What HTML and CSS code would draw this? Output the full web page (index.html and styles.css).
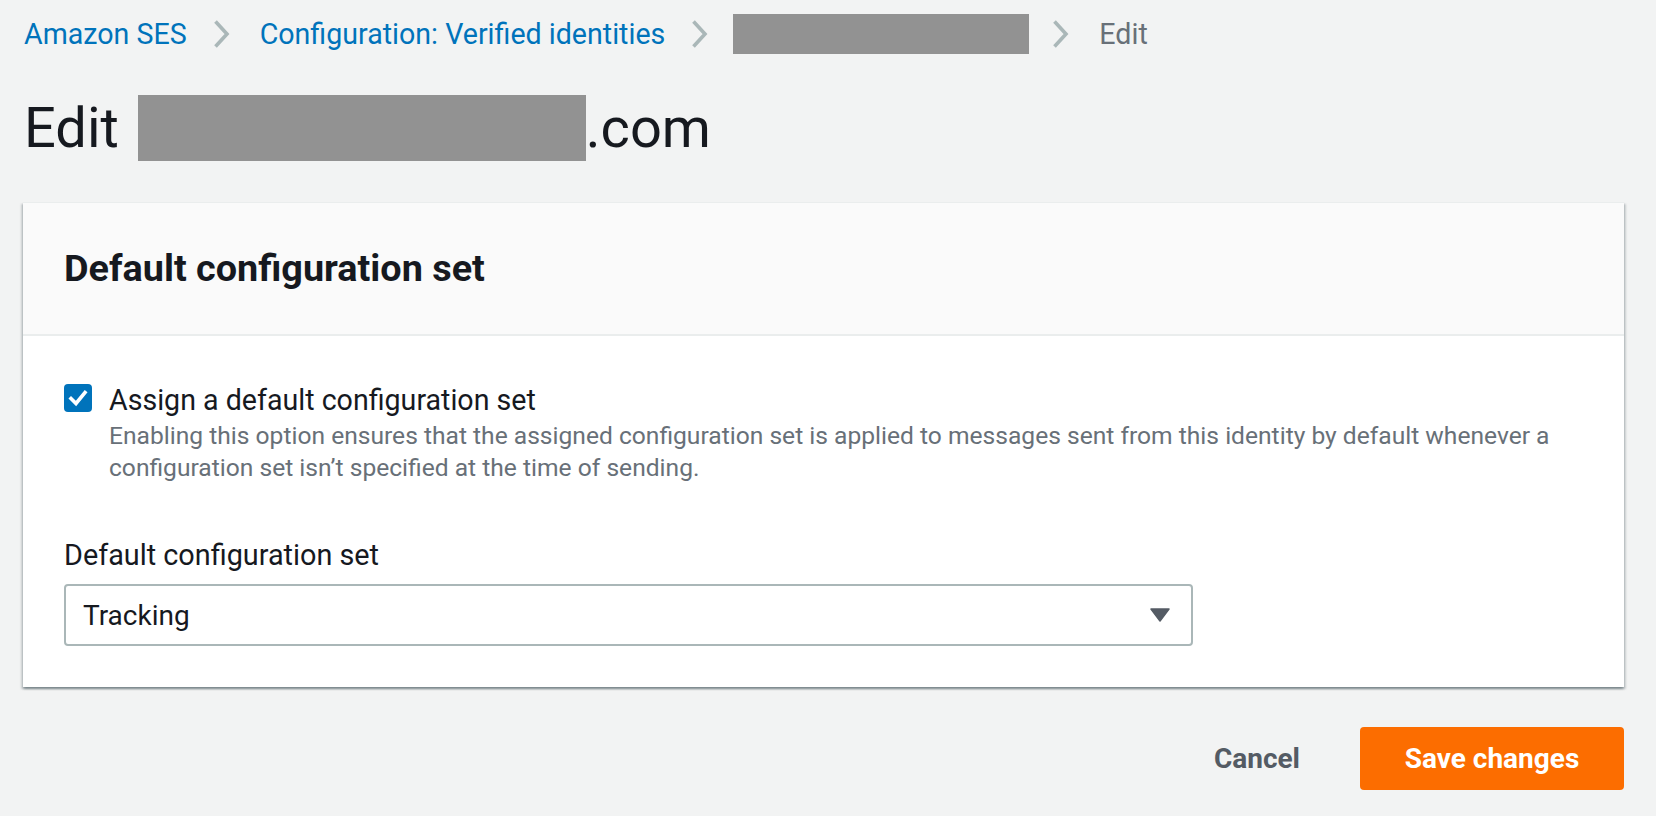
FILE: index.html
```html
<!DOCTYPE html>
<html lang="en">
<head>
<meta charset="utf-8">
<title>Edit identity</title>
<link rel="stylesheet" href="styles.css">
</head>
<body>
<div class="page">
  <nav class="breadcrumbs">
    <a class="crumb link" href="#">Amazon SES</a>
    <svg class="chev" width="17" height="30" viewBox="0 0 17 30"><path d="M2.5 2.5 L14 15 L2.5 27.5" fill="none" stroke="#aab7b8" stroke-width="3.6"/></svg>
    <a class="crumb link" href="#">Configuration: Verified identities</a>
    <svg class="chev" width="17" height="30" viewBox="0 0 17 30"><path d="M2.5 2.5 L14 15 L2.5 27.5" fill="none" stroke="#aab7b8" stroke-width="3.6"/></svg>
    <span class="redact crumb-redact"></span>
    <svg class="chev" width="17" height="30" viewBox="0 0 17 30"><path d="M2.5 2.5 L14 15 L2.5 27.5" fill="none" stroke="#aab7b8" stroke-width="3.6"/></svg>
    <span class="crumb current">Edit</span>
  </nav>

  <h1 class="title">Edit <span class="redact title-redact"></span>.com</h1>

  <section class="container">
    <header class="container-header">
      <h2>Default configuration set</h2>
    </header>
    <div class="container-body">
      <div class="checkbox-row">
        <span class="checkbox">
          <svg width="28" height="28" viewBox="0 0 28 28"><rect x="0" y="0" width="28" height="28" rx="4" fill="#0073bb"/><path d="M7 14.5 L12 19.5 L21 8.5" fill="none" stroke="#fff" stroke-width="3.6" stroke-linecap="square"/></svg>
        </span>
        <div class="checkbox-text">
          <div class="checkbox-label">Assign a default configuration set</div>
          <div class="checkbox-desc">Enabling this option ensures that the assigned configuration set is applied to messages sent from this identity by default whenever a configuration set isn’t specified at the time of sending.</div>
        </div>
      </div>

      <div class="field">
        <label class="field-label">Default configuration set</label>
        <div class="select">
          <span class="select-value">Tracking</span>
          <svg class="caret" width="20" height="14" viewBox="0 0 20 14"><path d="M1 1 H19 L10 13 Z" fill="#545b64" stroke="#545b64" stroke-width="1.5" stroke-linejoin="round"/></svg>
        </div>
      </div>
    </div>
  </section>

  <div class="actions">
    <button class="btn btn-link">Cancel</button>
    <button class="btn btn-primary">Save changes</button>
  </div>
</div>
</body>
</html>
```

FILE: styles.css
```css
html, body {
  margin: 0;
  padding: 0;
}
body {
  background: #f2f3f3;
  font-family: Roboto, "Liberation Sans", sans-serif;
  color: #16191f;
}
.page {
  padding: 14px 32px 0 23px;
}
.breadcrumbs {
  display: flex;
  align-items: center;
  height: 40px;
  font-size: 28.6px;
  line-height: 40px;
  padding-left: 1px;
}
.crumb.link {
  color: #0073bb;
  text-decoration: none;
}
.crumb.current {
  color: #687078;
}
.chev {
  display: block;
  margin: 0 30px 0 26px;
}
.redact {
  display: inline-block;
  background: #929292;
}
.crumb-redact {
  width: 296px;
  height: 40px;
  margin-left: -5px;
  margin-right: -3px;
}
.title {
  margin: 38px 0 0 1px;
  font-size: 56px;
  line-height: 72px;
  font-weight: 400;
  color: #16191f;
  display: flex;
  align-items: center;
}
.title-redact {
  width: 448px;
  height: 66px;
  margin-left: 19px;
}
.container {
  margin-top: 38px;
  background: #fff;
  box-shadow: 0 2px 2px rgba(0, 28, 36, 0.3), 2px 2px 2px rgba(0, 28, 36, 0.15), -2px 2px 2px rgba(0, 28, 36, 0.15);
  border-top: 1px solid #eaeded;
}
.container-header {
  background: #fafafa;
  padding: 43px 40px 44px 41px;
  border-bottom: 2px solid #eaeded;
}
.container-header h2 {
  margin: 0;
  font-size: 37.8px;
  line-height: 44px;
  font-weight: 700;
}
.container-body {
  padding: 44px 40px 41px 41px;
}
.checkbox-row {
  display: flex;
  align-items: flex-start;
}
.checkbox {
  display: block;
  width: 28px;
  height: 28px;
  margin-top: 4px;
  margin-right: 17px;
  flex: none;
}
.checkbox svg {
  display: block;
}
.checkbox-label {
  font-size: 28.6px;
  line-height: 40px;
  color: #16191f;
}
.checkbox-desc {
  font-size: 24.6px;
  line-height: 32px;
  color: #687078;
  max-width: 1470px;
}
.field {
  margin-top: 51px;
}
.field-label {
  display: block;
  font-size: 28.8px;
  line-height: 40px;
  color: #16191f;
}
.select {
  margin-top: 9px;
  width: 1129px;
  height: 62px;
  box-sizing: border-box;
  border: 2px solid #aab7b8;
  border-radius: 4px;
  background: #fff;
  display: flex;
  align-items: center;
  justify-content: space-between;
  padding: 0 21px 0 17px;
}
.select-value {
  font-size: 28px;
  color: #16191f;
}
.caret {
  display: block;
}
.actions {
  display: flex;
  justify-content: flex-end;
  align-items: center;
  gap: 20px;
  margin-top: 40px;
}
.btn {
  font-family: Roboto, "Liberation Sans", sans-serif;
  font-size: 28px;
  font-weight: 700;
  height: 63px;
  padding: 0 40px;
  border-radius: 4px;
  border: none;
  cursor: pointer;
}
.btn-link {
  background: transparent;
  color: #545b64;
}
.btn-primary {
  background: #fc6d00;
  color: #fff;
  padding: 0 42px;
  width: 264px;
}
```
